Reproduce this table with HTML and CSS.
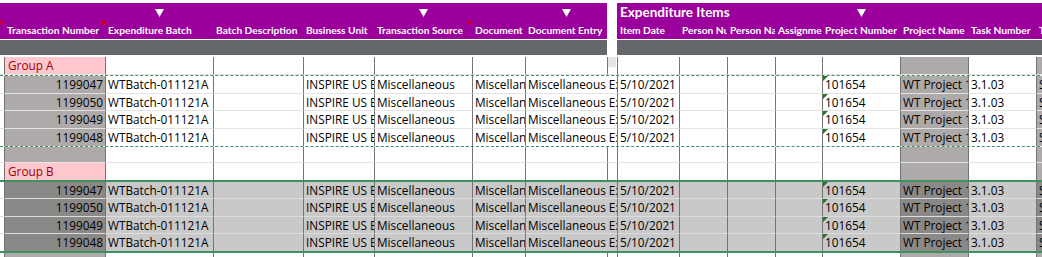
FILE: index.html
```html
<!DOCTYPE html>
<html>
<head>
<meta charset="utf-8">
<link rel="stylesheet" href="styles.css">
</head>
<body>
<div class="sheet">
  <div class="head">
    <div class="row hrow1">
      <div class="c"></div>
      <div class="c"></div>
      <div class="c tri-cell"><svg class="tri" width="9" height="8" viewBox="0 0 9 8"><polygon points="0,0 9,0 4.5,8" fill="#fff"/></svg></div>
      <div class="c"></div>
      <div class="c"></div>
      <div class="c tri-cell"><svg class="tri" width="9" height="8" viewBox="0 0 9 8"><polygon points="0,0 9,0 4.5,8" fill="#fff"/></svg></div>
      <div class="c"></div>
      <div class="c tri-cell"><svg class="tri" width="9" height="8" viewBox="0 0 9 8"><polygon points="0,0 9,0 4.5,8" fill="#fff"/></svg></div>
      <div class="c gap"></div>
      <div class="c group-title span3">Expenditure Items</div>
      <div class="c"></div>
      <div class="c tri-cell"><svg class="tri" width="9" height="8" viewBox="0 0 9 8"><polygon points="0,0 9,0 4.5,8" fill="#fff"/></svg></div>
      <div class="c"></div>
      <div class="c"></div>
      <div class="c"></div>
      <div class="c"></div>
    </div>
    <div class="row hrow2">
      <div class="c note"></div>
      <div class="c note">Transaction Number</div>
      <div class="c">Expenditure Batch</div>
      <div class="c">Batch Description</div>
      <div class="c">Business Unit</div>
      <div class="c note">Transaction Source</div>
      <div class="c">Document</div>
      <div class="c">Document Entry</div>
      <div class="c gap"></div>
      <div class="c">Item Date</div>
      <div class="c">Person Number</div>
      <div class="c">Person Name</div>
      <div class="c">Assignment</div>
      <div class="c">Project Number</div>
      <div class="c">Project Name</div>
      <div class="c">Task Number</div>
      <div class="c">Task Name</div>
    </div>
  </div>

  <div class="row band">
    <div class="c"></div><div class="c"></div><div class="c"></div><div class="c"></div>
    <div class="c"></div><div class="c"></div><div class="c"></div><div class="c"></div>
    <div class="c gap"></div>
    <div class="c"></div><div class="c"></div><div class="c"></div><div class="c"></div>
    <div class="c"></div><div class="c"></div><div class="c"></div><div class="c"></div>
  </div>

  <div class="body">
    <div class="row drow grow h18">
      <div class="c"></div><div class="c bad">Group A</div><div class="c"></div><div class="c"></div>
      <div class="c"></div><div class="c"></div><div class="c"></div><div class="c"></div>
      <div class="c gap lite"></div>
      <div class="c"></div><div class="c"></div><div class="c"></div><div class="c"></div>
      <div class="c"></div><div class="c shade"></div><div class="c"></div><div class="c shade"></div>
    </div>

    <div class="copyrange">
      <div class="row drow h18">
        <div class="c"></div><div class="c num shade">1199047</div><div class="c">WTBatch-011121A</div><div class="c"></div>
        <div class="c">INSPIRE US Business Unit</div><div class="c">Miscellaneous</div><div class="c">Miscellaneous</div><div class="c span2">Miscellaneous Expenditure</div>
        <div class="c">5/10/2021</div><div class="c"></div><div class="c"></div><div class="c"></div>
        <div class="c txtnum">101654</div><div class="c shade">WT Project 1</div><div class="c">3.1.03</div><div class="c shade">Setup</div>
      </div>
      <div class="row drow h17">
        <div class="c"></div><div class="c num shade">1199050</div><div class="c">WTBatch-011121A</div><div class="c"></div>
        <div class="c">INSPIRE US Business Unit</div><div class="c">Miscellaneous</div><div class="c">Miscellaneous</div><div class="c span2">Miscellaneous Expenditure</div>
        <div class="c">5/10/2021</div><div class="c"></div><div class="c"></div><div class="c"></div>
        <div class="c txtnum">101654</div><div class="c shade">WT Project 1</div><div class="c">3.1.03</div><div class="c shade">Setup</div>
      </div>
      <div class="row drow h18">
        <div class="c"></div><div class="c num shade">1199049</div><div class="c">WTBatch-011121A</div><div class="c"></div>
        <div class="c">INSPIRE US Business Unit</div><div class="c">Miscellaneous</div><div class="c">Miscellaneous</div><div class="c span2">Miscellaneous Expenditure</div>
        <div class="c">5/10/2021</div><div class="c"></div><div class="c"></div><div class="c"></div>
        <div class="c txtnum">101654</div><div class="c shade">WT Project 1</div><div class="c">3.1.03</div><div class="c shade">Setup</div>
      </div>
      <div class="row drow h17 last">
        <div class="c"></div><div class="c num shade">1199048</div><div class="c">WTBatch-011121A</div><div class="c"></div>
        <div class="c">INSPIRE US Business Unit</div><div class="c">Miscellaneous</div><div class="c">Miscellaneous</div><div class="c span2">Miscellaneous Expenditure</div>
        <div class="c">5/10/2021</div><div class="c"></div><div class="c"></div><div class="c"></div>
        <div class="c txtnum">101654</div><div class="c shade">WT Project 1</div><div class="c">3.1.03</div><div class="c shade">Setup</div>
      </div>
    </div>

    <div class="row drow h16">
      <div class="c"></div><div class="c shade"></div><div class="c"></div><div class="c"></div>
      <div class="c"></div><div class="c"></div><div class="c"></div><div class="c"></div>
      <div class="c gap"></div>
      <div class="c"></div><div class="c"></div><div class="c"></div><div class="c"></div>
      <div class="c"></div><div class="c shade"></div><div class="c"></div><div class="c shade"></div>
    </div>

    <div class="row drow grow h17 last">
      <div class="c"></div><div class="c bad">Group B</div><div class="c"></div><div class="c"></div>
      <div class="c"></div><div class="c"></div><div class="c"></div><div class="c"></div>
      <div class="c gap"></div>
      <div class="c"></div><div class="c"></div><div class="c"></div><div class="c"></div>
      <div class="c"></div><div class="c shade"></div><div class="c"></div><div class="c shade"></div>
    </div>

    <div class="selrange">
      <div class="row drow h17">
        <div class="c"></div><div class="c num shade">1199047</div><div class="c">WTBatch-011121A</div><div class="c"></div>
        <div class="c">INSPIRE US Business Unit</div><div class="c">Miscellaneous</div><div class="c">Miscellaneous</div><div class="c span2">Miscellaneous Expenditure</div>
        <div class="c">5/10/2021</div><div class="c"></div><div class="c"></div><div class="c"></div>
        <div class="c txtnum">101654</div><div class="c shade">WT Project 1</div><div class="c">3.1.03</div><div class="c shade">Setup</div>
      </div>
      <div class="row drow h18">
        <div class="c"></div><div class="c num shade">1199050</div><div class="c">WTBatch-011121A</div><div class="c"></div>
        <div class="c">INSPIRE US Business Unit</div><div class="c">Miscellaneous</div><div class="c">Miscellaneous</div><div class="c span2">Miscellaneous Expenditure</div>
        <div class="c">5/10/2021</div><div class="c"></div><div class="c"></div><div class="c"></div>
        <div class="c txtnum">101654</div><div class="c shade">WT Project 1</div><div class="c">3.1.03</div><div class="c shade">Setup</div>
      </div>
      <div class="row drow h17">
        <div class="c"></div><div class="c num shade">1199049</div><div class="c">WTBatch-011121A</div><div class="c"></div>
        <div class="c">INSPIRE US Business Unit</div><div class="c">Miscellaneous</div><div class="c">Miscellaneous</div><div class="c span2">Miscellaneous Expenditure</div>
        <div class="c">5/10/2021</div><div class="c"></div><div class="c"></div><div class="c"></div>
        <div class="c txtnum">101654</div><div class="c shade">WT Project 1</div><div class="c">3.1.03</div><div class="c shade">Setup</div>
      </div>
      <div class="row drow h17 last">
        <div class="c"></div><div class="c num shade">1199048</div><div class="c">WTBatch-011121A</div><div class="c"></div>
        <div class="c">INSPIRE US Business Unit</div><div class="c">Miscellaneous</div><div class="c">Miscellaneous</div><div class="c span2">Miscellaneous Expenditure</div>
        <div class="c">5/10/2021</div><div class="c"></div><div class="c"></div><div class="c"></div>
        <div class="c txtnum">101654</div><div class="c shade">WT Project 1</div><div class="c">3.1.03</div><div class="c shade">Setup</div>
      </div>
    </div>

    <div class="row drow h17">
      <div class="c"></div><div class="c shade"></div><div class="c"></div><div class="c"></div>
      <div class="c"></div><div class="c"></div><div class="c"></div><div class="c"></div>
      <div class="c gap"></div>
      <div class="c"></div><div class="c"></div><div class="c"></div><div class="c"></div>
      <div class="c"></div><div class="c shade"></div><div class="c"></div><div class="c shade"></div>
    </div>
  </div>
</div>
</body>
</html>
```

FILE: styles.css
```css
:root {
  --cols: 4px 101px 108px 90px 71px 98px 53px 82px 10px 62px 48px 48px 47px 78px 68px 68px 60px;
  --purple: #9c009c;
  --band: #63666a;
  --vline: #747474;
  --hline: #e3e3e3;
  --shade: #aeaaaa;
}

html, body {
  margin: 0;
  padding: 0;
  background: #fff;
  overflow: hidden;
}

body {
  width: 1042px;
  height: 257px;
  font-family: "Open Sans", "Noto Sans", sans-serif;
  font-size: 11.8px;
  color: #000;
}

.sheet {
  padding-top: 3px;
  width: 1100px;
}

.row {
  display: grid;
  grid-template-columns: var(--cols);
}

.c {
  position: relative;
  white-space: nowrap;
  overflow: hidden;
  box-sizing: border-box;
  min-width: 0;
}

/* ---------- header ---------- */
.head .c {
  background: var(--purple);
  color: #fff;
  font-family: Lato, "Open Sans", sans-serif;
  font-weight: 700;
}

.head .c.gap {
  background: #fff;
}

.hrow1 {
  height: 18px;
}

.hrow1 .c {
  overflow: visible;
}

.tri-cell {
  display: flex;
  justify-content: center;
  align-items: center;
}

.tri {
  display: block;
  margin-top: 1px;
}

.group-title {
  grid-column: span 3;
  font-size: 13.5px;
  line-height: 18px;
  padding-left: 3px;
}

.hrow2 {
  height: 18px;
}

.hrow2 .c {
  font-size: 10.2px;
  line-height: 19px;
  padding-left: 3px;
}

.note::after {
  content: "";
  position: absolute;
  top: 0;
  right: 0;
  width: 0;
  height: 0;
  border-top: 5px solid #e00000;
  border-left: 5px solid transparent;
}

/* ---------- band ---------- */
.band {
  margin-top: 1px;
  height: 15px;
  margin-bottom: 2px;
}

.band .c {
  background: var(--band);
}

.band .c.gap {
  background: #fff;
}

/* ---------- data ---------- */
.drow .c {
  border-left: 1px solid var(--vline);
  border-bottom: 1px solid var(--hline);
  padding: 0 2px;
  line-height: 17px;
}

.drow .c:first-child {
  border-left: none;
}

.drow.last .c {
  border-bottom: none;
}

.h18 { height: 18px; }
.h17 { height: 17px; }
.h16 { height: 16px; }

.span2 {
  grid-column: span 2;
}

.num {
  text-align: right;
}

.shade {
  background: var(--shade);
}

.gap.lite {
  background: linear-gradient(#e6e6e6, #e6e6e6) no-repeat 0 0 / 8px 10px;
}

.bad {
  background: #ffc7ce;
  color: #9c0006;
}

.drow .c.bad {
  padding-left: 3px;
}

.txtnum::before {
  content: "";
  position: absolute;
  top: 0;
  left: 0;
  width: 0;
  height: 0;
  border-top: 5px solid #1f7a1f;
  border-right: 5px solid transparent;
}

.copyrange {
  border-top: 1px dashed #3f8f5f;
  border-bottom: 1px dashed #3f8f5f;
}

.selrange {
  border-top: 2px solid #3f8f5f;
  border-bottom: 2px solid #3f8f5f;
}

.selrange .c {
  background: #c9c9c9;
  border-bottom-color: #dcdcdc;
}

.selrange .c.shade {
  background: #8b8888;
}

.selrange .c:first-child {
  background: #fff;
}
```
